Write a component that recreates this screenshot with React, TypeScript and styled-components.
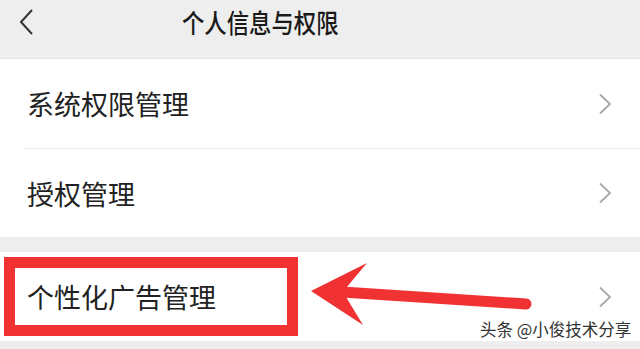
import styled, { createGlobalStyle } from 'styled-components';

const GlobalStyle = createGlobalStyle`
  html, body {
    margin: 0;
    padding: 0;
    background: #eeeeee;
  }
  body {
    font-family: "Noto Sans CJK SC", "Noto Sans", sans-serif;
  }
`;

const Page = styled.div`
  position: relative;
  width: 640px;
  height: 349px;
  overflow: hidden;
  background: #eeeeee;
`;

const Header = styled.header`
  height: 59px;
  border-bottom: 1px solid #e4e4e4;
  display: flex;
  align-items: flex-start;
  padding: 8px 0 0 19px;
  box-sizing: border-box;
`;

const BackButton = styled.div`
  width: 16px;
  height: 28px;
  display: flex;
  align-items: center;
`;

const Title = styled.h1`
  margin: 0 0 0 147px;
  font-size: 26px;
  line-height: 28px;
  font-weight: 500;
  color: #1a1a1a;
  white-space: nowrap;
  transform: scaleX(0.86);
  transform-origin: left center;
`;

const Group = styled.section<{ $gap?: boolean }>`
  background: #ffffff;
  margin-top: ${({ $gap }) => ($gap ? '15px' : '0')};
`;

const Row = styled.div<{ $height: number }>`
  height: ${({ $height }) => $height}px;
  display: flex;
  align-items: center;
  justify-content: space-between;
  padding: 0 28px 0 27px;
  box-sizing: border-box;
`;

const Divider = styled.div`
  height: 1px;
  margin-left: 24px;
  background: #ececec;
`;

const Label = styled.span`
  font-size: 27px;
  color: #222222;
  line-height: 1;
`;

const Chevron = () => (
  <svg width="14" height="22" viewBox="0 0 14 22">
    <path d="M2 1.5 L12 11 L2 20.5" fill="none" stroke="#a8a8a8" strokeWidth="1.8" />
  </svg>
);

const HighlightBox = styled.div`
  position: absolute;
  left: 4px;
  top: 257px;
  width: 294px;
  height: 79px;
  border: 11px solid #f03232;
  box-sizing: border-box;
  pointer-events: none;
`;

const ArrowLayer = styled.svg`
  position: absolute;
  left: 0;
  top: 0;
  pointer-events: none;
`;

const Watermark = styled.div`
  position: absolute;
  left: 480px;
  top: 319px;
  font-size: 16.5px;
  line-height: 20px;
  color: #333333;
  white-space: nowrap;
  text-shadow: 0 0 2px #ffffff, 0 0 2px #ffffff;
`;

export default function App() {
  return (
    <>
      <GlobalStyle />
      <Page>
        <Header>
          <BackButton>
            <svg width="14" height="28" viewBox="0 0 14 28">
              <path d="M13 2 L2 14 L13 26" fill="none" stroke="#333" strokeWidth="2" />
            </svg>
          </BackButton>
          <Title>个人信息与权限</Title>
        </Header>
        <Group>
          <Row $height={89}>
            <Label>系统权限管理</Label>
            <Chevron />
          </Row>
          <Divider />
          <Row $height={88}>
            <Label>授权管理</Label>
            <Chevron />
          </Row>
        </Group>
        <Group $gap>
          <Row $height={89}>
            <Label>个性化广告管理</Label>
            <Chevron />
          </Row>
        </Group>
        <HighlightBox />
        <ArrowLayer width="640" height="349" viewBox="0 0 640 349">
          <line x1="342" y1="292" x2="526" y2="304" stroke="#f03232" strokeWidth="11" strokeLinecap="round" />
          <polygon points="311,291 367,263 346,288 346,297 363,325" fill="#f03232" />
        </ArrowLayer>
        <Watermark>头条 @小俊技术分享</Watermark>
      </Page>
    </>
  );
}
